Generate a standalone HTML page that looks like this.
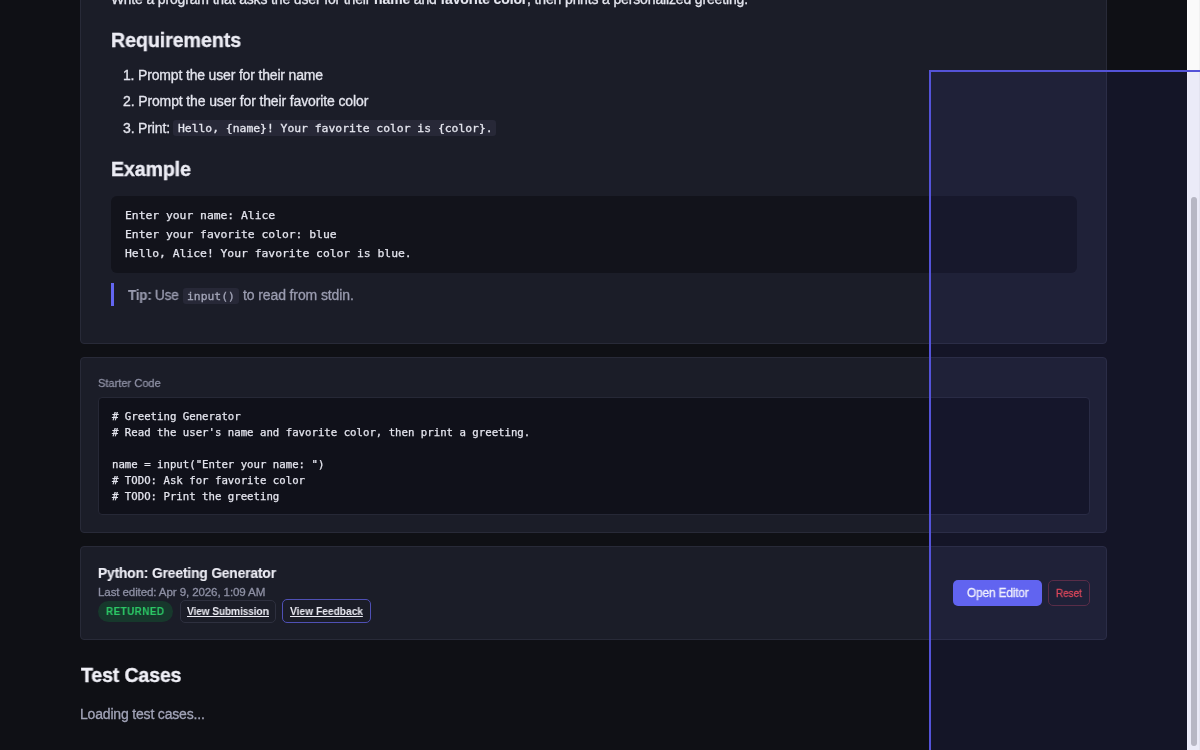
<!DOCTYPE html>
<html lang="en">
<head>
<meta charset="utf-8">
<title>Python: Greeting Generator</title>
<style>
*{box-sizing:border-box;margin:0;padding:0}
html,body{width:1200px;height:750px;overflow:hidden;background:#0f1015;}
body{position:relative;font-family:"Liberation Sans",Arial,sans-serif;color:#e4e5ee;}
.abs{position:absolute;}
.card{position:absolute;left:80px;width:1027px;background:#1b1d28;border:1px solid #282a38;border-radius:4px;}
.t{position:absolute;white-space:nowrap;line-height:1;will-change:transform;-webkit-text-stroke:0.3px currentColor;}
.mono{font-family:"DejaVu Sans Mono","Liberation Mono",monospace;}
b{-webkit-text-stroke:0.1px currentColor;}
pre{font-family:"DejaVu Sans Mono","Liberation Mono",monospace;position:absolute;white-space:pre;will-change:transform;-webkit-text-stroke:0.25px currentColor;}
</style>
</head>
<body>

<!-- description card -->
<div class="card" id="c1" style="top:-40px;height:384px;"></div>
<p class="t" id="l0" style="left:110.50px;top:-7.85px;font-size:14px;letter-spacing:-0.148px;color:#e4e5ee;">Write a program that asks the user for their <b>name</b> and <b>favorite color</b>, then prints a personalized greeting.</p>
<h2 class="t" id="h1" style="left:110.75px;top:29.98px;font-size:20.4px;letter-spacing:-0.045px;-webkit-text-stroke:0.35px currentColor;font-weight:bold;color:#ececf4;transform:scaleX(0.96);transform-origin:0 0;">Requirements</h2>
<div class="t" id="li1" style="left:122.50px;top:67.90px;font-size:14px;letter-spacing:-0.166px;color:#e4e5ee;">1. Prompt the user for their name</div>
<div class="t" id="li2" style="left:123.20px;top:93.95px;font-size:14px;letter-spacing:-0.124px;color:#e4e5ee;">2. Prompt the user for their favorite color</div>
<div class="t" id="li3" style="left:123.20px;top:120.55px;font-size:14px;letter-spacing:-0.150px;color:#e4e5ee;">3. Print:</div>
<div class="abs" id="code1bg" style="left:173px;top:120px;width:323px;height:16px;background:#272837;border-radius:3px;"></div>
<code class="t mono" id="code1" style="left:178.00px;top:122.87px;font-size:11.375px;letter-spacing:0.000px;color:#e4e5ee;">Hello, {name}! Your favorite color is {color}.</code>
<h2 class="t" id="h2" style="left:110.80px;top:158.93px;font-size:20.4px;letter-spacing:-0.100px;-webkit-text-stroke:0.35px currentColor;font-weight:bold;color:#ececf4;transform:scaleX(0.96);transform-origin:0 0;">Example</h2>
<div class="abs" id="pre1bg" style="left:111px;top:196px;width:966px;height:77px;background:#12131b;border-radius:6px;"></div>
<pre id="pre1" style="left:125.00px;top:205.56px;font-size:11.375px;line-height:19px;letter-spacing:-0.015px;color:#e4e5ee;">Enter your name: Alice
Enter your favorite color: blue
Hello, Alice! Your favorite color is blue.</pre>
<div class="abs" id="bar" style="left:111px;top:283px;width:3px;height:23px;background:#6366f1;"></div>
<div class="t" id="tipa" style="left:127.75px;top:288.15px;font-size:14px;letter-spacing:-0.286px;color:#9a9cb0;transform:scaleX(0.97);transform-origin:0 0;"><b>Tip:</b> Use</div>
<div class="abs" id="code2bg" style="left:182.5px;top:288px;width:56.5px;height:16px;background:#272837;border-radius:3px;"></div>
<code class="t mono" id="code2" style="left:187.00px;top:291.37px;font-size:11.375px;letter-spacing:0.000px;color:#a3a5b8;">input()</code>
<div class="t" id="tipb" style="left:243.00px;top:288.15px;font-size:14px;letter-spacing:-0.111px;color:#9a9cb0;">to read from stdin.</div>

<!-- starter code card -->
<div class="card" id="c2" style="top:357px;height:175.5px;"></div>
<label class="t" id="sc" style="left:98.10px;top:377.08px;font-size:11.6px;letter-spacing:0.027px;color:#8e90a4;transform:scaleX(0.95);transform-origin:0 0;">Starter Code</label>
<div class="abs" id="pre2bg" style="left:98px;top:397px;width:992px;height:118px;background:#10111a;border:1px solid #262836;border-radius:4px;"></div>
<pre id="pre2" style="left:111.90px;top:409.30px;font-size:10.7px;line-height:16px;letter-spacing:0.000px;color:#e4e5ee;"># Greeting Generator
# Read the user's name and favorite color, then print a greeting.

name = input("Enter your name: ")
# TODO: Ask for favorite color
# TODO: Print the greeting</pre>

<!-- assignment card -->
<div class="card" id="c3" style="top:546px;height:94px;"></div>
<h3 class="t" id="title" style="left:97.60px;top:566.48px;font-size:14.2px;letter-spacing:-0.096px;-webkit-text-stroke:0.15px currentColor;font-weight:bold;color:#ececf4;transform:scaleX(0.965);transform-origin:0 0;">Python: Greeting Generator</h3>
<div class="t" id="edited" style="left:97.60px;top:586.18px;font-size:11.6px;letter-spacing:-0.127px;color:#8e90a4;">Last edited: Apr 9, 2026, 1:09 AM</div>
<div class="abs" id="badge" style="left:98px;top:600.5px;width:75px;height:21px;background:#17382c;border-radius:11px;"></div>
<span class="t" id="badget" style="left:106.25px;top:605.69px;font-size:11px;letter-spacing:0.471px;-webkit-text-stroke:0.1px currentColor;font-weight:bold;color:#2cc565;transform:scaleX(0.9);transform-origin:0 0;">RETURNED</span>
<div class="abs" id="btn1" style="left:179.5px;top:599.5px;width:96px;height:23px;border:1px solid #2e303f;border-radius:5px;"></div>
<a class="t" id="btn1t" style="left:186.90px;top:605.78px;font-size:10.6px;letter-spacing:-0.129px;-webkit-text-stroke:0;font-weight:bold;color:#ececf4;text-decoration:underline;text-underline-offset:1px;transform:scaleX(0.96);transform-origin:0 0;">View Submission</a>
<div class="abs" id="btn2" style="left:282px;top:599px;width:89px;height:24px;border:1.5px solid #4f50b5;border-radius:5px;"></div>
<a class="t" id="btn2t" style="left:290.25px;top:605.78px;font-size:10.6px;letter-spacing:0.000px;-webkit-text-stroke:0;font-weight:bold;color:#ececf4;text-decoration:underline;text-underline-offset:1px;transform:scaleX(0.965);transform-origin:0 0;">View Feedback</a>
<div class="abs" id="open" style="left:953px;top:579.5px;width:89px;height:26.5px;background:#6366f1;border-radius:5px;"></div>
<span class="t" id="opent" style="left:966.50px;top:586.50px;font-size:12.4px;letter-spacing:-0.140px;color:#ffffff;transform:scaleX(0.955);transform-origin:0 0;">Open Editor</span>
<div class="abs" id="reset" style="left:1048px;top:579.5px;width:42px;height:26.5px;border:1px solid #5a2a39;border-radius:5px;"></div>
<span class="t" id="resett" style="left:1056.25px;top:588.99px;font-size:10.4px;letter-spacing:0.000px;color:#e8474f;transform:scaleX(0.95);transform-origin:0 0;">Reset</span>

<!-- test cases -->
<h2 class="t" id="tc" style="left:81.00px;top:664.98px;font-size:20.4px;letter-spacing:-0.167px;-webkit-text-stroke:0.35px currentColor;font-weight:bold;color:#f0f0f7;transform:scaleX(0.96);transform-origin:0 0;">Test Cases</h2>
<p class="t" id="load" style="left:80.00px;top:706.65px;font-size:14px;letter-spacing:-0.180px;color:#a2a4b8;">Loading test cases...</p>

<!-- scrollbar -->
<div class="abs" id="sbar" style="left:1187px;top:0;width:13px;height:750px;background:#fafafa;border-left:1px solid #ffffff;border-right:1px solid #f1f1f1;"></div>
<div class="abs" id="thumb" style="left:1191px;top:197px;width:6px;height:549px;background:#c1c1c1;border-radius:3px;"></div>

<!-- highlight overlay -->
<div class="abs" id="ov" style="left:929px;top:70px;width:300px;height:700px;border:2px solid #5453d8;background:rgba(84,80,235,0.085);"></div>

</body>
</html>
